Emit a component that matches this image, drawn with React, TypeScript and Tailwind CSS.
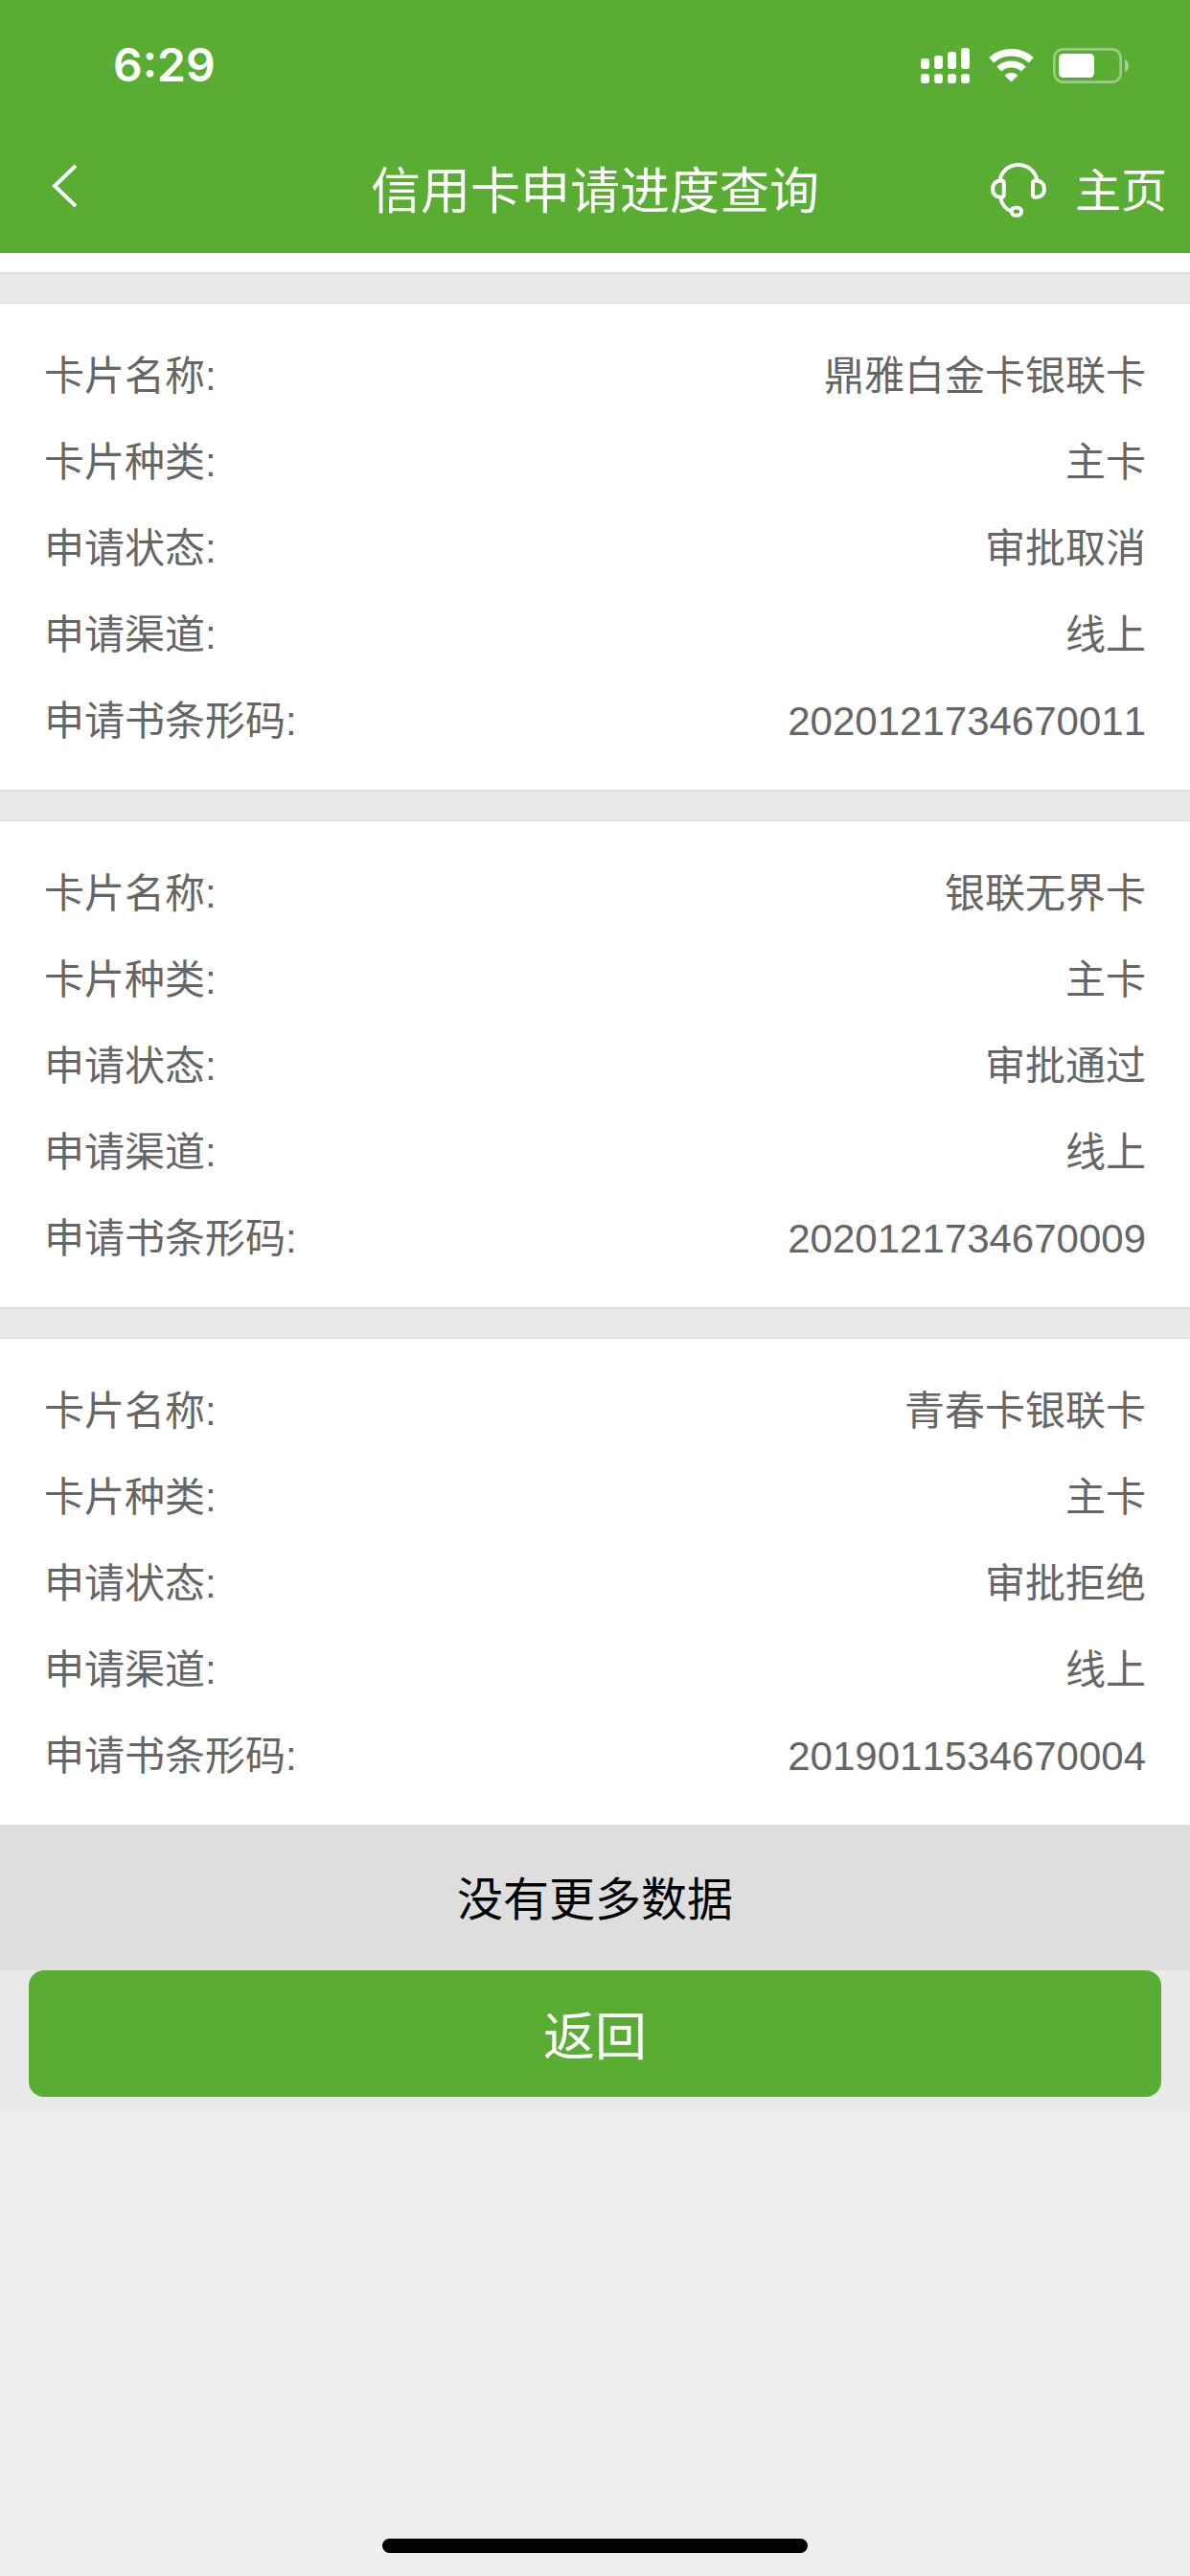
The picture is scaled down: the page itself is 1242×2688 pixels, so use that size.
type Application = {
  name: string;
  kind: string;
  status: string;
  channel: string;
  barcode: string;
};

const applications: Application[] = [
  { name: '鼎雅白金卡银联卡', kind: '主卡', status: '审批取消', channel: '线上', barcode: '2020121734670011' },
  { name: '银联无界卡', kind: '主卡', status: '审批通过', channel: '线上', barcode: '2020121734670009' },
  { name: '青春卡银联卡', kind: '主卡', status: '审批拒绝', channel: '线上', barcode: '2019011534670004' },
];

const fields: { key: keyof Application; label: string }[] = [
  { key: 'name', label: '卡片名称:' },
  { key: 'kind', label: '卡片种类:' },
  { key: 'status', label: '申请状态:' },
  { key: 'channel', label: '申请渠道:' },
  { key: 'barcode', label: '申请书条形码:' },
];

function SignalIcon() {
  return (
    <svg viewBox="0 0 153 111" className="w-[51px] h-[37px]" fill="currentColor" aria-hidden="true">
      <rect x="0" y="33" width="27" height="33" rx="9" />
      <rect x="42" y="24" width="27" height="42" rx="9" />
      <rect x="84" y="12" width="27" height="54" rx="9" />
      <rect x="126" y="0" width="27" height="66" rx="9" />
      <rect x="0" y="81" width="27" height="30" rx="10" />
      <rect x="42" y="81" width="27" height="30" rx="10" />
      <rect x="84" y="81" width="27" height="30" rx="10" />
      <rect x="126" y="81" width="27" height="30" rx="10" />
    </svg>
  );
}

function WifiIcon() {
  return (
    <svg viewBox="0 0 141 108" className="w-[47px] h-9" fill="none" stroke="currentColor" aria-hidden="true">
      <path d="M8 38 A94 94 0 0 1 133 38" strokeWidth="22" />
      <path d="M32 66 A57 57 0 0 1 109 66" strokeWidth="21" />
      <path d="M70 105 L51 86 A32 32 0 0 1 90 86 Z" fill="currentColor" strokeWidth="3" strokeLinejoin="round" />
    </svg>
  );
}

function BatteryIcon() {
  return (
    <svg viewBox="0 0 240 111" className="w-20 h-[37px]" fill="none" aria-hidden="true">
      <rect x="4" y="4" width="208" height="103" rx="28" stroke="currentColor" strokeWidth="8" opacity="0.4" />
      <path d="M225 36 C241 42 241 69 225 75 Z" fill="currentColor" opacity="0.45" />
      <rect x="18" y="18" width="111" height="75" rx="14" fill="currentColor" />
    </svg>
  );
}

function HeadsetIcon() {
  return (
    <svg
      viewBox="0 0 174 172"
      className="w-[58px] h-[57px]"
      fill="none"
      stroke="currentColor"
      strokeWidth="12"
      aria-hidden="true"
    >
      <path d="M28 56 C33 26 57 6 86 6 S141 26 146 56" />
      <path d="M32 56 h2 q7 0 7 9 v34 q0 9 -7 9 h-2 C15 108 6 98 6 82 S15 56 32 56 Z" />
      <path d="M142 56 h-2 q-8 0 -8 9 v34 q0 9 8 9 h2 C159 108 168 98 168 82 S159 56 142 56 Z" />
      <path d="M30 108 C34 132 48 147 66 153" />
      <rect x="65" y="141" width="31" height="24" rx="11" />
    </svg>
  );
}

function ApplicationCard({ item }: { item: Application }) {
  return (
    <dl className="bg-white border-t border-b-2 border-[#dcdcdc] px-[46px] pt-[31px] pb-[26px]">
      {fields.map(({ key, label }) => (
        <div key={key} className="flex justify-between text-[42px] leading-[90px] text-[#666666]">
          <dt>{label}</dt>
          <dd className="[font-kerning:none]">{item[key]}</dd>
        </div>
      ))}
    </dl>
  );
}

export default function App() {
  return (
    <div
      lang="zh-CN"
      className="min-h-screen flex flex-col bg-[#efefef] font-['Liberation_Sans','Noto_Sans_CJK_SC',sans-serif]"
    >
      <header className="bg-[#58ad32] text-white">
        {/* Status bar */}
        <div className="h-[132px] pt-1 pl-[118px] pr-[63px] flex items-center justify-between">
          <span className="font-['Inter',sans-serif] text-5xl font-semibold">6:29</span>
          <div className="flex items-center gap-5">
            <SignalIcon />
            <WifiIcon />
            <BatteryIcon />
          </div>
        </div>

        {/* Nav bar */}
        <div className="h-[132px] grid grid-cols-[1fr_auto_1fr] items-center">
          <button type="button" aria-label="返回上一页" className="justify-self-start pl-[54px] pr-8 pt-3 pb-5">
            <svg viewBox="0 0 26 46" className="w-[26px] h-[46px]" fill="none" stroke="currentColor" strokeWidth="4">
              <path d="M25 2 L3 23 L25 44" />
            </svg>
          </button>
          <h1 className="pt-1 text-[52px]">信用卡申请进度查询</h1>
          <div className="justify-self-end flex items-center gap-[30px] pr-6">
            <button type="button" aria-label="客服">
              <HeadsetIcon />
            </button>
            <a href="#home" className="pt-1 text-5xl">主页</a>
          </div>
        </div>
      </header>

      <main className="bg-[#e9e9e9] pb-[17px]">
        {/* Tail of the card scrolled under the header */}
        <div className="h-[22px] bg-white border-b-2 border-[#dcdcdc]" />
        <div className="pt-[30px] flex flex-col gap-[30px]">
          {applications.map((item) => (
            <ApplicationCard key={item.barcode} item={item} />
          ))}
        </div>
        <p className="bg-[#dedede] pt-1 text-center text-5xl leading-[146px] text-black">没有更多数据</p>
        <div className="px-[30px]">
          <button type="button" className="w-full h-[132px] pt-2 rounded-2xl bg-[#58ad32] text-white text-[54px]">
            返回
          </button>
        </div>
      </main>

      {/* Home indicator */}
      <div className="mt-auto mx-auto mb-6 w-[444px] h-[15px] rounded-full bg-black" />
    </div>
  );
}
